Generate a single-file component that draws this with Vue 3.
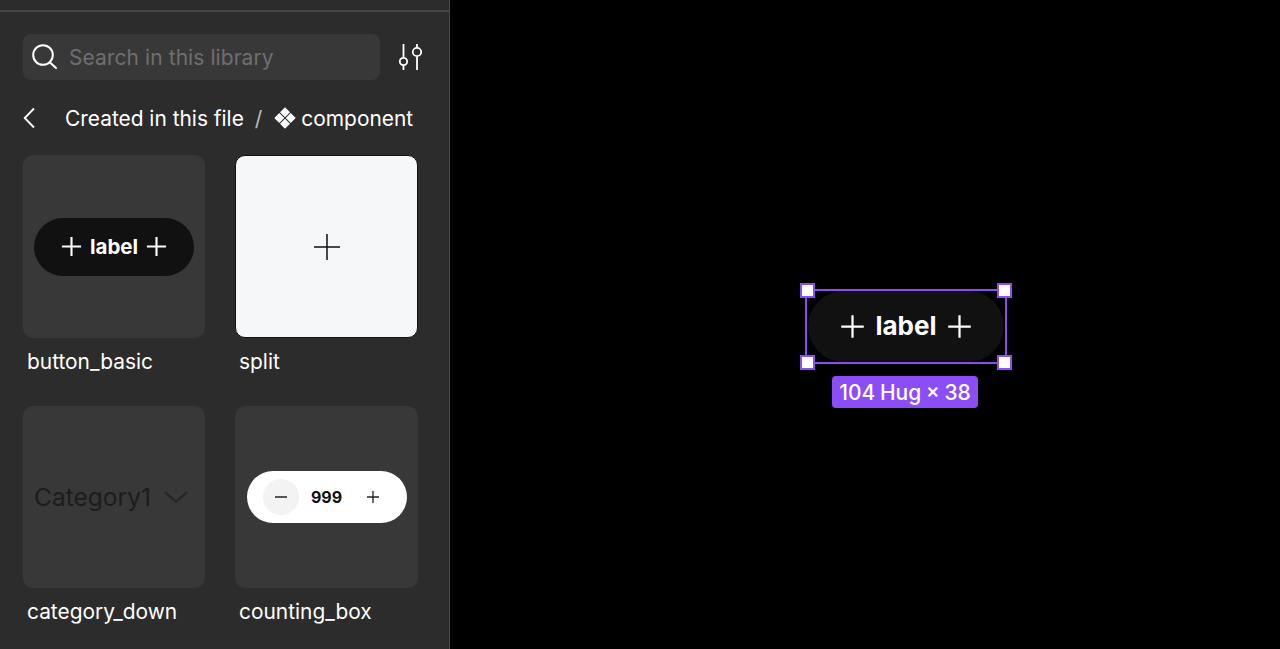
<script setup>
const plusPaths = 'M12 2v20M2 12h20'
</script>

<template>
  <div class="app">
    <aside class="sidebar">
      <div class="top-strip"></div>

      <div class="search-row">
        <div class="search">
          <svg class="search-icon" width="28" height="28" viewBox="0 0 28 28" fill="none" stroke="#fff" stroke-width="2">
            <circle cx="13" cy="12" r="9.800" />
            <path d="M20 19.500l6 5.500" stroke-linecap="round" />
          </svg>
          <span class="placeholder">Search in this library</span>
        </div>
        <svg class="filter-icon" width="26" height="28" viewBox="0 0 26 28" fill="none" stroke="#fff" stroke-width="1.800">
          <path d="M6.500 1v13.800M6.500 22.200V27M20 1v3.800M20 13.200V27" />
          <circle cx="6.500" cy="18.500" r="3.700" />
          <circle cx="20" cy="9" r="4.200" />
        </svg>
      </div>

      <div class="crumbs">
        <svg class="back" width="14" height="22" viewBox="0 0 14 22" fill="none" stroke="#fff" stroke-width="1.800">
          <path d="M11 1.500L1.700 11l9.300 9.500" />
        </svg>
        <span class="crumb">Created in this file</span>
        <span class="slash">/</span>
        <svg class="comp-icon" width="22" height="22" viewBox="0 0 22 22" fill="#fff">
          <path d="M11 0.300l5 5-5 5-5-5zM5.300 6l5 5-5 5-5-5zM16.700 6l5 5-5 5-5-5zM11 11.700l5 5-5 5-5-5z" />
        </svg>
        <span class="crumb">component</span>
      </div>

      <div class="grid">
        <div class="item">
          <div class="thumb">
            <div class="mini-btn">
              <svg width="23" height="23" viewBox="0 0 24 24" fill="none" stroke="#fff" stroke-width="2.200"><path :d="plusPaths" /></svg>
              <span>label</span>
              <svg width="23" height="23" viewBox="0 0 24 24" fill="none" stroke="#fff" stroke-width="2.200"><path :d="plusPaths" /></svg>
            </div>
          </div>
          <div class="name">button_basic</div>
        </div>

        <div class="item">
          <div class="thumb light">
            <svg width="28" height="28" viewBox="0 0 28 28" fill="none" stroke="#111" stroke-width="1.500"><path d="M14 1v26M1 14h26" /></svg>
          </div>
          <div class="name">split</div>
        </div>

        <div class="item">
          <div class="thumb">
            <div class="category">
              <span>Category1</span>
              <svg width="26" height="16" viewBox="0 0 26 16" fill="none" stroke="#242424" stroke-width="1.800"><path d="M2 3l11 10L24 3" /></svg>
            </div>
          </div>
          <div class="name">category_down</div>
        </div>

        <div class="item">
          <div class="thumb">
            <div class="counter">
              <div class="step minus">
                <svg width="14" height="14" viewBox="0 0 14 14" fill="none" stroke="#222" stroke-width="1.500"><path d="M1 7h12" /></svg>
              </div>
              <span class="count">999</span>
              <div class="step">
                <svg width="14" height="14" viewBox="0 0 14 14" fill="none" stroke="#222" stroke-width="1.300"><path d="M7 1v12M1 7h12" /></svg>
              </div>
            </div>
          </div>
          <div class="name">counting_box</div>
        </div>
      </div>
    </aside>

    <main class="canvas">
      <div class="selection">
        <div class="big-btn">
          <svg width="27" height="27" viewBox="0 0 24 24" fill="none" stroke="#fff" stroke-width="2"><path :d="plusPaths" /></svg>
          <span class="big-label">label</span>
          <svg width="27" height="27" viewBox="0 0 24 24" fill="none" stroke="#fff" stroke-width="2"><path :d="plusPaths" /></svg>
        </div>
        <i class="handle tl"></i>
        <i class="handle tr"></i>
        <i class="handle bl"></i>
        <i class="handle br"></i>
        <div class="size-tag">104 Hug × 38</div>
      </div>
    </main>
  </div>
</template>

<style>
html, body {
  margin: 0;
  background: #000;
}
</style>

<style scoped>
.app {
  display: flex;
  width: 1280px;
  height: 649px;
  overflow: hidden;
  font-family: Inter, "Liberation Sans", sans-serif;
  color: #fff;
}

.sidebar {
  width: 450px;
  box-sizing: border-box;
  background: #2c2c2c;
  border-right: 1px solid #4a4a4a;
  flex-shrink: 0;
}

.top-strip {
  height: 10px;
  border-bottom: 2px solid #444;
}

.search-row {
  display: flex;
  align-items: center;
  margin: 22px 0 0 23px;
}

.search {
  width: 357px;
  height: 46px;
  display: flex;
  align-items: center;
  gap: 11px;
  padding-left: 7px;
  box-sizing: border-box;
  background: #383838;
  border-radius: 8px;
}

.placeholder {
  font-size: 21px;
  letter-spacing: 0.07px;
  color: #6f6f6f;
}

.filter-icon {
  margin-left: 17px;
}

.crumbs {
  display: flex;
  align-items: center;
  height: 30px;
  margin: 23px 0 0 23px;
  font-size: 20.900px;
}

.back {
  margin-right: 28px;
}

.slash {
  margin: 0 12px 0 11px;
  color: #bdbdbd;
}

.comp-icon {
  margin-right: 5px;
}

.grid {
  display: grid;
  grid-template-columns: 182px 183px;
  column-gap: 30px;
  row-gap: 30px;
  margin: 22px 0 0 23px;
}

.thumb {
  height: 183px;
  display: flex;
  align-items: center;
  justify-content: center;
  background: #383838;
  border-radius: 10px;
}

.item:nth-child(n + 3) .thumb {
  height: 182px;
}

.thumb.light {
  background: #f6f7f9;
  box-sizing: border-box;
  border: 1px solid #111;
}

.name {
  margin: 10px 0 0 4px;
  height: 28px;
  line-height: 28px;
  font-size: 20.900px;
  white-space: nowrap;
}

.mini-btn {
  width: 160px;
  height: 58px;
  display: flex;
  align-items: center;
  justify-content: center;
  gap: 7px;
  background: #111;
  border-radius: 29px;
  font-size: 20.500px;
  font-weight: 700;
}

.category {
  display: flex;
  align-items: center;
  gap: 12px;
  margin-right: 5px;
  font-size: 24.500px;
  color: #1c1c1c;
}

.counter {
  width: 160px;
  height: 52px;
  display: flex;
  align-items: center;
  padding-left: 16px;
  box-sizing: border-box;
  background: #fff;
  border-radius: 26px;
}

.step {
  width: 36px;
  height: 36px;
  display: flex;
  align-items: center;
  justify-content: center;
  border-radius: 50%;
}

.minus {
  background: #f3f3f3;
}

.count {
  width: 56px;
  text-align: center;
  font-size: 16px;
  font-weight: 700;
  color: #111;
}

.canvas {
  flex: 1;
  position: relative;
  background: #000;
}

.selection {
  position: absolute;
  left: 355px;
  top: 289px;
  width: 202px;
  height: 75px;
  box-sizing: border-box;
  border: 2px solid #8a4cf0;
}

.big-btn {
  width: 196px;
  height: 71px;
  margin-left: 1px;
  display: flex;
  align-items: center;
  justify-content: center;
  gap: 9px;
  background: #111;
  border-radius: 36px;
  font-size: 26px;
  font-weight: 700;
}

.big-label {
  margin-bottom: 2px;
}

.handle {
  position: absolute;
  width: 15px;
  height: 15px;
  box-sizing: border-box;
  background: #fff;
  border: 2px solid #8b4df5;
}

.tl { left: -7px; top: -8px; }
.tr { left: 190px; top: -8px; }
.bl { left: -7px; top: 64px; }
.br { left: 190px; top: 64px; }

.size-tag {
  position: absolute;
  left: 25px;
  top: 85px;
  width: 146px;
  height: 32px;
  line-height: 34px;
  text-align: center;
  background: #8b4df5;
  border-radius: 4px;
  font-size: 21px;
  font-weight: 500;
  word-spacing: -1px;
  white-space: nowrap;
}
</style>
